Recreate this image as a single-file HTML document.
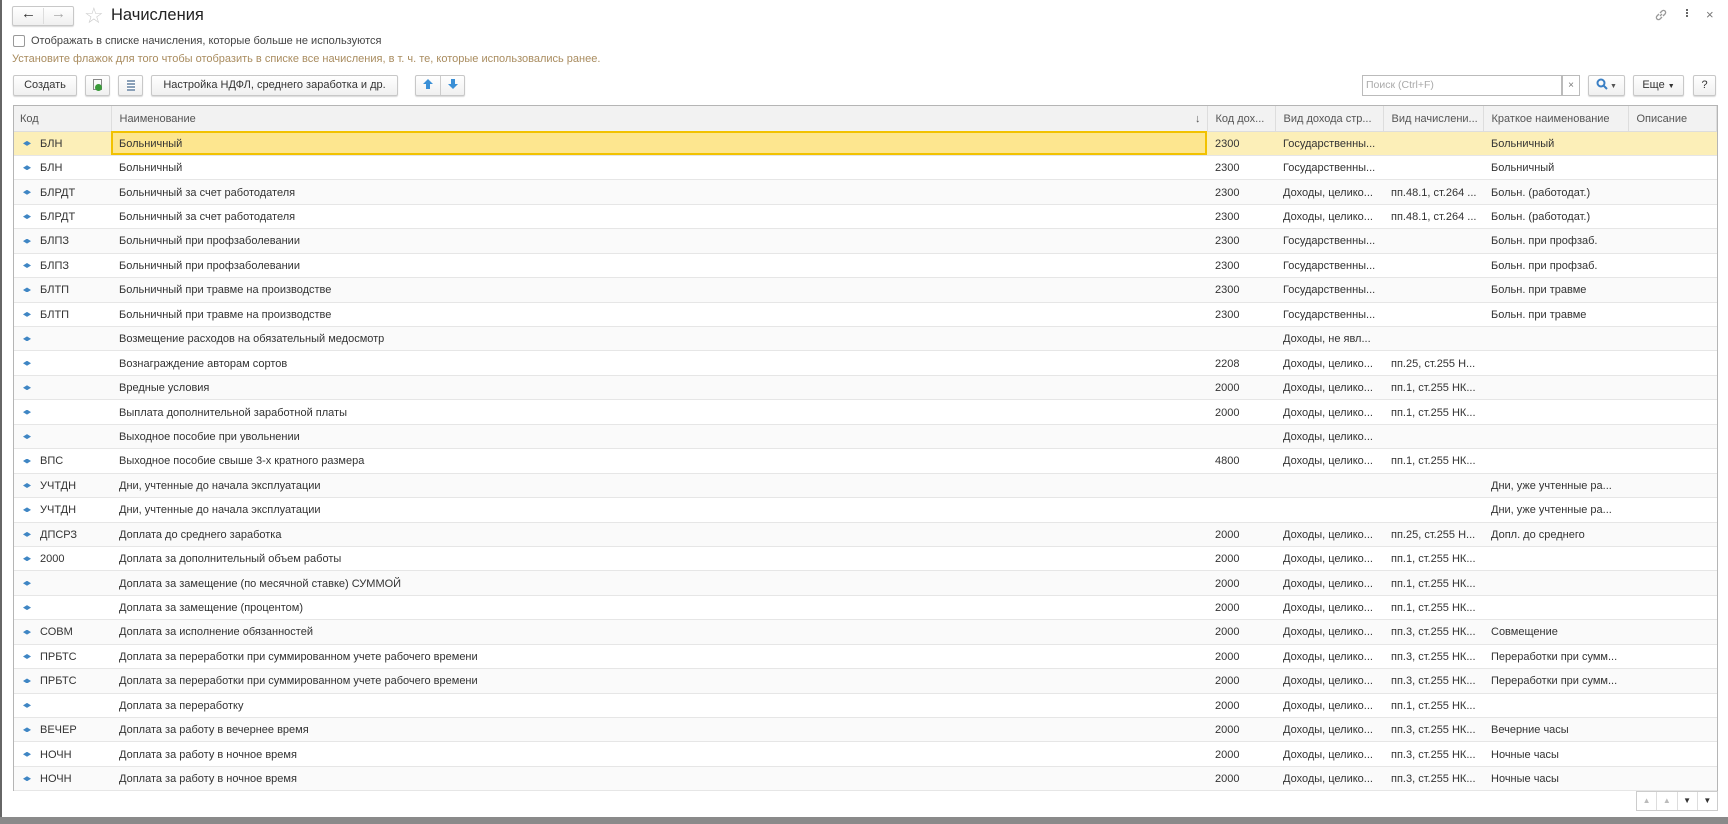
<!DOCTYPE html>
<html><head><meta charset="utf-8"><style>
*{box-sizing:border-box;margin:0;padding:0}
body{width:1728px;height:824px;background:#fff;font-family:"Liberation Sans",Arial,sans-serif;color:#333;font-size:11px;position:relative;overflow:hidden}
.abs{position:absolute}
.btn{position:absolute;height:21px;border:1px solid #c8c8c8;border-radius:2px;background:linear-gradient(#fff,#f0f0f0);box-shadow:0 1px 1px rgba(0,0,0,.15);font-size:11px;line-height:19px;text-align:center;color:#333}
table{position:absolute;left:14px;top:106px;width:1703px;border-collapse:collapse;table-layout:fixed}
td,th{height:24.44px;padding:1px 6px 0 8px;white-space:nowrap;overflow:hidden;font-weight:normal;text-align:left;font-size:11px}
td:first-child,th:first-child{padding-left:6px}
th{background:#f2f2f2;color:#555;border-right:1px solid #ddd;border-bottom:1px solid #ddd;height:25px}
td{border-bottom:1px solid #e6e6e6;color:#333}
tr:nth-child(even) td{background:#fafafa}
tr.sel td{background:#fcefb8}
tr.sel td.nm{background:#fde68f;outline:2px solid #f2c200;outline-offset:-2px}
.d{display:inline-block;width:8px;height:5px;background:#3f86c4;clip-path:polygon(0 50%,50% 0,100% 50%,50% 100%);margin:0 9px 1px 3px;vertical-align:middle}
</style></head><body>
<div class="abs" style="left:0;top:0;width:2px;height:824px;background:#666"></div>
<div class="abs" style="left:0;top:817px;width:1728px;height:7px;background:#8a8a8a"></div>
<div class="btn" style="left:12px;top:6px;width:62px;height:20px"></div>
<div class="abs" style="left:43px;top:8px;width:1px;height:16px;background:#ddd"></div>
<div class="abs" style="left:21px;top:5px;font-size:15px;color:#333">&#8592;</div>
<div class="abs" style="left:51px;top:5px;font-size:15px;color:#aaa">&#8594;</div>
<div class="abs" style="left:84px;top:3px;font-size:22px;color:#ccc">&#9734;</div>
<div class="abs" style="left:111px;top:6px;font-size:16.5px;color:#222">Начисления</div>
<svg class="abs" style="left:1654px;top:8px" width="14" height="14" viewBox="0 0 14 14" fill="none" stroke="#999" stroke-width="1.3"><path d="M6 8l2-2M5 6L3 8a2 2 0 003 3l2-2M9 8l2-2a2 2 0 00-3-3L6 5"/></svg>
<div class="abs" style="left:1686px;top:9px;width:2px;height:2px;background:#666;box-shadow:0 3px #666,0 6px #666"></div>
<div class="abs" style="left:1706px;top:7px;font-size:13px;color:#777">&#215;</div>
<div class="abs" style="left:13px;top:35px;width:12px;height:12px;border:1px solid #999;border-radius:2px"></div>
<div class="abs" style="left:31px;top:35px;color:#444">Отображать в списке начисления, которые больше не используются</div>
<div class="abs" style="left:12px;top:53px;color:#a98c5f;font-size:11px">Установите флажок для того чтобы отобразить в списке все начисления, в т. ч. те, которые использовались ранее.</div>
<div class="btn" style="left:13px;top:75px;width:64px">Создать</div>
<div class="btn" style="left:85px;top:75px;width:25px"><span style="display:inline-block;width:9px;height:11px;border:1px solid #888;margin-top:3px;position:relative"><span style="position:absolute;left:1px;top:4px;width:7px;height:7px;border-radius:50%;background:#3a9a3a"></span></span></div>
<div class="btn" style="left:118px;top:75px;width:25px"><span style="display:inline-block;width:8px;height:11px;background:repeating-linear-gradient(#8aa0b8 0 2px,#fff 2px 3px);margin-top:4px"></span></div>
<div class="btn" style="left:151px;top:75px;width:247px">Настройка НДФЛ, среднего заработка и др.</div>
<div class="btn" style="left:415px;top:75px;width:50px"><svg width="12" height="12" viewBox="0 0 12 12" style="vertical-align:-2px"><path d="M6 1L11 6H8V11H4V6H1Z" fill="#3a8fd6"/></svg><span style="display:inline-block;width:1px;height:19px;background:#ccc;vertical-align:top;margin:0 6px"></span><svg width="12" height="12" viewBox="0 0 12 12" style="vertical-align:-2px"><path d="M6 11L11 6H8V1H4V6H1Z" fill="#3a8fd6"/></svg></div>
<div class="abs" style="left:1362px;top:75px;width:200px;height:21px;border:1px solid #bbb;color:#aaa;padding-left:3px;line-height:19px;font-size:10.5px">Поиск (Ctrl+F)</div>
<div class="abs" style="left:1562px;top:75px;width:18px;height:21px;border:1px solid #bbb;text-align:center;color:#777;line-height:19px;font-size:10px">×</div>
<div class="btn" style="left:1588px;top:75px;width:37px"><svg width="12" height="12" viewBox="0 0 12 12" style="vertical-align:-2px" fill="none" stroke="#3a7fc4" stroke-width="2"><circle cx="5" cy="5" r="3.5"/><path d="M7.5 7.5L11 11"/></svg><span style="color:#555;font-size:7px"> ▼</span></div>
<div class="btn" style="left:1633px;top:75px;width:51px">Еще <span style="font-size:7px">▼</span></div>
<div class="btn" style="left:1693px;top:75px;width:23px">?</div>
<div class="abs" style="left:13px;top:105px;width:1705px;height:686px;border:1px solid #b5b5b5"></div>
<table>
<colgroup><col style="width:97px"><col style="width:1096px"><col style="width:68px"><col style="width:108px"><col style="width:100px"><col style="width:145px"><col></colgroup>
<tr><th>Код</th><th>Наименование<span style="float:right">↓</span></th><th>Код дох...</th><th>Вид дохода стр...</th><th>Вид начислени...</th><th>Краткое наименование</th><th>Описание</th></tr>
<tr class="sel"><td><i class="d"></i>БЛН</td><td class="nm">Больничный</td><td>2300</td><td>Государственны...</td><td></td><td>Больничный</td><td></td></tr>
<tr><td><i class="d"></i>БЛН</td><td>Больничный</td><td>2300</td><td>Государственны...</td><td></td><td>Больничный</td><td></td></tr>
<tr><td><i class="d"></i>БЛРДТ</td><td>Больничный за счет работодателя</td><td>2300</td><td>Доходы, целико...</td><td>пп.48.1, ст.264 ...</td><td>Больн. (работодат.)</td><td></td></tr>
<tr><td><i class="d"></i>БЛРДТ</td><td>Больничный за счет работодателя</td><td>2300</td><td>Доходы, целико...</td><td>пп.48.1, ст.264 ...</td><td>Больн. (работодат.)</td><td></td></tr>
<tr><td><i class="d"></i>БЛПЗ</td><td>Больничный при профзаболевании</td><td>2300</td><td>Государственны...</td><td></td><td>Больн. при профзаб.</td><td></td></tr>
<tr><td><i class="d"></i>БЛПЗ</td><td>Больничный при профзаболевании</td><td>2300</td><td>Государственны...</td><td></td><td>Больн. при профзаб.</td><td></td></tr>
<tr><td><i class="d"></i>БЛТП</td><td>Больничный при травме на производстве</td><td>2300</td><td>Государственны...</td><td></td><td>Больн. при травме</td><td></td></tr>
<tr><td><i class="d"></i>БЛТП</td><td>Больничный при травме на производстве</td><td>2300</td><td>Государственны...</td><td></td><td>Больн. при травме</td><td></td></tr>
<tr><td><i class="d"></i></td><td>Возмещение расходов на обязательный медосмотр</td><td></td><td>Доходы, не явл...</td><td></td><td></td><td></td></tr>
<tr><td><i class="d"></i></td><td>Вознаграждение авторам сортов</td><td>2208</td><td>Доходы, целико...</td><td>пп.25, ст.255 Н...</td><td></td><td></td></tr>
<tr><td><i class="d"></i></td><td>Вредные условия</td><td>2000</td><td>Доходы, целико...</td><td>пп.1, ст.255 НК...</td><td></td><td></td></tr>
<tr><td><i class="d"></i></td><td>Выплата дополнительной заработной платы</td><td>2000</td><td>Доходы, целико...</td><td>пп.1, ст.255 НК...</td><td></td><td></td></tr>
<tr><td><i class="d"></i></td><td>Выходное пособие при увольнении</td><td></td><td>Доходы, целико...</td><td></td><td></td><td></td></tr>
<tr><td><i class="d"></i>ВПС</td><td>Выходное пособие свыше 3-х кратного размера</td><td>4800</td><td>Доходы, целико...</td><td>пп.1, ст.255 НК...</td><td></td><td></td></tr>
<tr><td><i class="d"></i>УЧТДН</td><td>Дни, учтенные до начала эксплуатации</td><td></td><td></td><td></td><td>Дни, уже учтенные ра...</td><td></td></tr>
<tr><td><i class="d"></i>УЧТДН</td><td>Дни, учтенные до начала эксплуатации</td><td></td><td></td><td></td><td>Дни, уже учтенные ра...</td><td></td></tr>
<tr><td><i class="d"></i>ДПСРЗ</td><td>Доплата до среднего заработка</td><td>2000</td><td>Доходы, целико...</td><td>пп.25, ст.255 Н...</td><td>Допл. до среднего</td><td></td></tr>
<tr><td><i class="d"></i>2000</td><td>Доплата за дополнительный объем работы</td><td>2000</td><td>Доходы, целико...</td><td>пп.1, ст.255 НК...</td><td></td><td></td></tr>
<tr><td><i class="d"></i></td><td>Доплата за замещение (по месячной ставке) СУММОЙ</td><td>2000</td><td>Доходы, целико...</td><td>пп.1, ст.255 НК...</td><td></td><td></td></tr>
<tr><td><i class="d"></i></td><td>Доплата за замещение (процентом)</td><td>2000</td><td>Доходы, целико...</td><td>пп.1, ст.255 НК...</td><td></td><td></td></tr>
<tr><td><i class="d"></i>СОВМ</td><td>Доплата за исполнение обязанностей</td><td>2000</td><td>Доходы, целико...</td><td>пп.3, ст.255 НК...</td><td>Совмещение</td><td></td></tr>
<tr><td><i class="d"></i>ПРБТС</td><td>Доплата за переработки при суммированном учете рабочего времени</td><td>2000</td><td>Доходы, целико...</td><td>пп.3, ст.255 НК...</td><td>Переработки при сумм...</td><td></td></tr>
<tr><td><i class="d"></i>ПРБТС</td><td>Доплата за переработки при суммированном учете рабочего времени</td><td>2000</td><td>Доходы, целико...</td><td>пп.3, ст.255 НК...</td><td>Переработки при сумм...</td><td></td></tr>
<tr><td><i class="d"></i></td><td>Доплата за переработку</td><td>2000</td><td>Доходы, целико...</td><td>пп.1, ст.255 НК...</td><td></td><td></td></tr>
<tr><td><i class="d"></i>ВЕЧЕР</td><td>Доплата за работу в вечернее время</td><td>2000</td><td>Доходы, целико...</td><td>пп.3, ст.255 НК...</td><td>Вечерние часы</td><td></td></tr>
<tr><td><i class="d"></i>НОЧН</td><td>Доплата за работу в ночное время</td><td>2000</td><td>Доходы, целико...</td><td>пп.3, ст.255 НК...</td><td>Ночные часы</td><td></td></tr>
<tr><td><i class="d"></i>НОЧН</td><td>Доплата за работу в ночное время</td><td>2000</td><td>Доходы, целико...</td><td>пп.3, ст.255 НК...</td><td>Ночные часы</td><td></td></tr>
</table>
<div class="abs" style="left:1636px;top:791px;width:82px;height:20px;border:1px solid #ccc;display:flex;font-size:8px;line-height:18px;text-align:center">
<span style="flex:1;color:#bbb;border-right:1px solid #ddd">▲</span><span style="flex:1;color:#bbb;border-right:1px solid #ddd">▲</span><span style="flex:1;color:#333;border-right:1px solid #ddd">▼</span><span style="flex:1;color:#333">▼</span></div>
</body></html>
